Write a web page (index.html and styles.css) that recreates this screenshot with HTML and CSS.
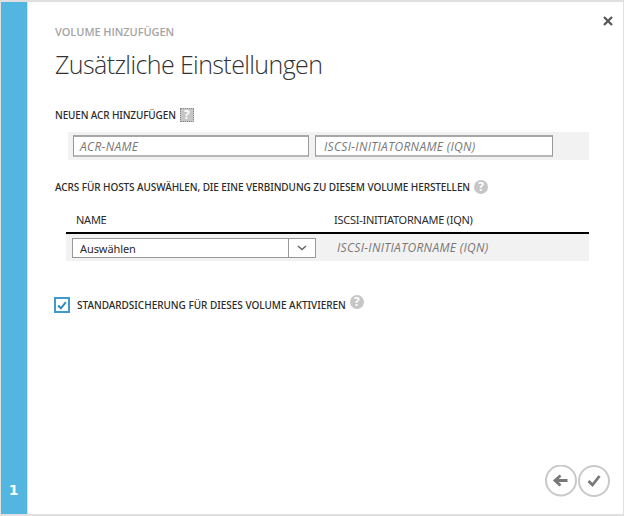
FILE: index.html
```html
<!DOCTYPE html>
<html lang="de">
<head>
<meta charset="utf-8">
<title>Volume hinzufügen</title>
<link rel="stylesheet" href="styles.css">
</head>
<body>
<div class="dialog">
  <aside class="rail"><span class="step">1</span></aside>
  <main class="content">
    <button class="close" aria-label="Schließen"><svg width="10" height="10" viewBox="0 0 10 10"><path d="M1 1L9 9M9 1L1 9"/></svg></button>
    <div class="crumb"><span>VOLUME HINZUFÜGEN</span></div>
    <h1 class="title"><span>Zusätzliche Einstellungen</span></h1>

    <div class="label label-new"><span>NEUEN ACR HINZUFÜGEN</span><i class="help help-focus">?</i></div>
    <div class="new-row">
      <div class="field"><span class="hint">ACR-NAME</span></div>
      <div class="field field-iqn"><span class="hint">ISCSI-INITIATORNAME (IQN)</span></div>
    </div>

    <div class="label label-hosts"><span>ACRS FÜR HOSTS AUSWÄHLEN, DIE EINE VERBINDUNG ZU DIESEM VOLUME HERSTELLEN</span><i class="help">?</i></div>
    <div class="table">
      <div class="thead"><span class="th-name">NAME</span><span class="th-iqn">ISCSI-INITIATORNAME (IQN)</span></div>
      <div class="trow">
        <div class="select"><span class="value">Auswählen</span><span class="arrow"><svg width="10" height="6" viewBox="0 0 10 6"><path d="M1 1L5 4.5L9 1"/></svg></span></div>
        <span class="hint">ISCSI-INITIATORNAME (IQN)</span>
      </div>
    </div>

    <div class="backup">
      <span class="check"><svg width="10" height="9" viewBox="0 0 9 8"><path d="M1 4L3.5 6.5L8 1"/></svg></span>
      <span class="backup-text">STANDARDSICHERUNG FÜR DIESES VOLUME AKTIVIEREN</span><i class="help help-up">?</i>
    </div>

    <footer class="nav">
      <svg width="32" height="32" viewBox="0 0 32 32"><circle cx="16" cy="15.5" r="15"/><path d="M22.5 15.5H10.5M15.5 10.5L10 15.5L15.5 20.5"/></svg>
      <svg width="32" height="32" viewBox="0 0 32 32"><circle cx="16" cy="16" r="15"/><path d="M10.5 16L14.5 20L21.5 11"/></svg>
    </footer>
  </main>
</div>
</body>
</html>
```
FILE: styles.css
```css
* { box-sizing: border-box; }
body { margin: 0; font-family: "Noto Sans", "Open Sans", sans-serif; background: #fff; color: #2a2a2a; }
.dialog { display: flex; width: 624px; height: 516px; border: solid #e0e0e0; border-width: 2px 1px 2px 1px; }
.rail { width: 27px; background: #53b6e0; border-right: 1px solid #dcdfe0; display: flex; align-items: flex-end; justify-content: center; padding: 0 1px 14px 0; }
.step { color: #fff; font: 700 14px/20px "DejaVu Sans", sans-serif; }
.content { position: relative; flex: 1; display: flex; flex-direction: column; padding: 0 0 0 27px; white-space: nowrap; }
.close { position: absolute; right: 10px; top: 14px; padding: 0; border: 0; background: none; line-height: 0; }
.close path { stroke: #555; stroke-width: 2.2; fill: none; }
.crumb { margin-top: 22px; height: 16px; font: 600 11px/16px "Open Sans", sans-serif; letter-spacing: -0.07px; color: #a5a5a5; }
.title { margin: 7px 0 0; font: 300 25px/34px "Open Sans", sans-serif; letter-spacing: -0.6px; color: #333; }
.label { display: flex; align-items: center; height: 16px; font-size: 10px; font-weight: 500; line-height: 16px; letter-spacing: -0.08px; }
.label-new { margin-top: 26px; letter-spacing: -0.13px; }
.help { flex: none; width: 14px; height: 14px; margin-left: 4px; border-radius: 50%; background: #c6c6c6; color: #fff; font: 700 12px/14px "Open Sans", sans-serif; letter-spacing: 0; text-align: center; }
.help-focus { border-radius: 0; border: 1px dotted #888; line-height: 12px; }
.new-row { display: flex; gap: 6px; margin: 9px 0 0 13px; width: 521px; height: 28px; padding: 3px 0 0 5px; background: #f2f2f2; }
.field { width: 236px; height: 22px; border: 2px solid #b8b8b8; border-top-color: #a8a8a8; border-right: 1px solid #999; border-left: 1px solid #999; background: #fff; padding-left: 6px; line-height: 17px; }
.field-iqn { width: 238px; padding-left: 8px; }
.hint { font: italic 400 12px/17px "Open Sans", sans-serif; letter-spacing: 0.32px; color: #777; }
.label-hosts { margin-top: 19px; }
.table { width: 523px; margin: 16px 0 0 11px; }
.thead { display: flex; height: 23px; border-bottom: 2px solid #000; font-size: 11px; line-height: 18px; letter-spacing: -0.25px; }
.th-name { width: 268px; padding-left: 10px; }
.trow { display: flex; height: 27px; padding: 4px 0 0 6px; background: #f2f2f2; }
.trow .hint { line-height: 19px; }
.select { display: flex; width: 244px; height: 20px; border: 1px solid #999; background: #fff; margin-right: 21px; }
.value { flex: 1; padding-left: 7px; font-size: 11px; line-height: 19px; letter-spacing: -0.08px; }
.arrow { width: 27px; border-left: 1px solid #999; display: flex; align-items: center; justify-content: center; }
.arrow path { stroke: #666; stroke-width: 1.5; fill: none; }
.backup { display: flex; align-items: center; height: 18px; margin: 35px 0 0 -1px; font-size: 10px; font-weight: 500; letter-spacing: -0.02px; }
.check { display: flex; align-items: center; justify-content: center; width: 16px; height: 16px; border: 2px solid #3f9bcf; margin-right: 7px; }
.check path { stroke: #2b8cc4; stroke-width: 1.8; fill: none; }
.help-up { margin-bottom: 7px; }
.nav { display: flex; gap: 1px; margin: auto 13px 17px auto; }
.nav circle { fill: none; stroke: #c9c9c9; stroke-width: 2; }
.nav path { fill: none; stroke: #777; stroke-width: 2.8; }
```
